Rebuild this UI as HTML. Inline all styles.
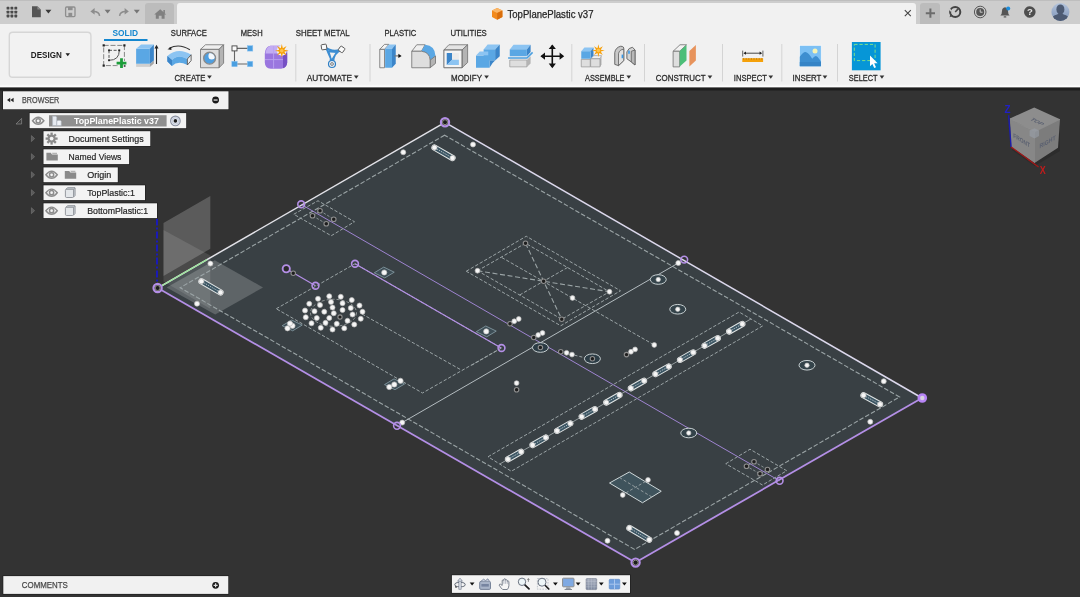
<!DOCTYPE html>
<html><head><meta charset="utf-8"><title>TopPlanePlastic v37</title>
<style>html,body{margin:0;padding:0;background:#333333;overflow:hidden}body{width:1080px;height:597px;font-family:"Liberation Sans",sans-serif}svg{display:block;will-change:transform}text{font-family:"Liberation Sans",sans-serif}</style>
</head><body>
<svg width="1080" height="597" viewBox="0 0 1080 597">
<rect x="0" y="88.5" width="1080" height="508.5" fill="#333333"/>
<polygon points="445.00,122.30 922.00,398.00 635.40,562.50 157.80,288.00" fill="#394044"/>
<polygon points="163.50,223.00 210.30,195.90 210.30,248.80 163.50,276.00" fill="#fff" opacity="0.2"/>
<polygon points="163.50,229.90 210.30,255.40 210.30,308.70 163.50,281.50" fill="#fff" opacity="0.11"/>
<polygon points="166.60,287.40 214.80,260.20 263.00,287.40 215.20,314.60" fill="#fff" opacity="0.19"/>
<polygon points="444.60,135.20 180.20,287.70 634.60,549.40 899.60,397.00" fill="none" stroke="#9ba4a6" stroke-width="1.1" stroke-dasharray="4.6 2"/>
<line x1="445.00" y1="122.30" x2="157.80" y2="288.00" stroke="#e2e2e8" stroke-width="1.5" opacity="1"/>
<line x1="445.00" y1="122.30" x2="922.00" y2="398.00" stroke="#dcd8ec" stroke-width="1.5" opacity="1"/>
<line x1="157.80" y1="288.00" x2="635.40" y2="562.50" stroke="#b48fe6" stroke-width="1.8" opacity="1"/>
<line x1="635.40" y1="562.50" x2="922.00" y2="398.00" stroke="#b48fe6" stroke-width="1.8" opacity="1"/>
<line x1="160.00" y1="286.80" x2="207.00" y2="259.60" stroke="#9be69b" stroke-width="1.3" opacity="1"/>
<line x1="157.00" y1="218.50" x2="157.00" y2="288.00" stroke="#1414d8" stroke-width="1.6" stroke-dasharray="7 2 2 2" opacity="1"/>
<line x1="301.00" y1="204.30" x2="779.50" y2="480.80" stroke="#a98be0" stroke-width="0.9" opacity="1"/>
<line x1="678.30" y1="263.00" x2="402.20" y2="422.60" stroke="#b4bcc0" stroke-width="1" opacity="1"/>
<polygon points="466.25,271.25 526.25,236.25 620.50,290.75 560.75,325.75" fill="none" stroke="#9ba4a6" stroke-width="1" stroke-dasharray="3.4 1.8"/>
<polygon points="477.50,270.75 525.50,243.25 609.50,291.75 561.75,319.25" fill="none" stroke="#9ba4a6" stroke-width="1" stroke-dasharray="3.4 1.8"/>
<line x1="477.50" y1="270.75" x2="609.50" y2="291.75" stroke="#9ba4a6" stroke-width="1.1" stroke-dasharray="5 2.6" opacity="1"/>
<line x1="525.50" y1="243.25" x2="561.75" y2="319.25" stroke="#9ba4a6" stroke-width="1.1" stroke-dasharray="5 2.6" opacity="1"/>
<line x1="501.75" y1="257.50" x2="654.25" y2="345.00" stroke="#9ba4a6" stroke-width="1" stroke-dasharray="3.4 1.8" opacity="1"/>
<line x1="519.60" y1="295.00" x2="567.50" y2="267.50" stroke="#9ba4a6" stroke-width="1" stroke-dasharray="3.4 1.8" opacity="1"/>
<circle cx="477.50" cy="270.75" r="2.4" fill="#f6f6f6" stroke="#bcbcbc" stroke-width="0.7"/>
<circle cx="609.50" cy="291.75" r="2.4" fill="#f6f6f6" stroke="#bcbcbc" stroke-width="0.7"/>
<circle cx="572.50" cy="298.00" r="2.4" fill="#f6f6f6" stroke="#bcbcbc" stroke-width="0.7"/>
<circle cx="654.25" cy="345.00" r="2.4" fill="#f6f6f6" stroke="#bcbcbc" stroke-width="0.7"/>
<circle cx="525.50" cy="243.25" r="2.25" fill="#1e1e1e" stroke="#8e8e8e" stroke-width="1.1"/>
<circle cx="561.75" cy="319.25" r="2.25" fill="#1e1e1e" stroke="#8e8e8e" stroke-width="1.1"/>
<circle cx="543.60" cy="281.25" r="2.25" fill="#1e1e1e" stroke="#8e8e8e" stroke-width="1.1"/>
<polygon points="276.25,308.75 355.00,263.75 501.25,348.00 422.50,393.00" fill="none" stroke="#9ba4a6" stroke-width="1" stroke-dasharray="3.4 1.8"/>
<line x1="362.00" y1="314.00" x2="461.25" y2="370.00" stroke="#9ba4a6" stroke-width="1" stroke-dasharray="3.4 1.8" opacity="1"/>
<line x1="501.50" y1="348.00" x2="470.00" y2="366.20" stroke="#9ba4a6" stroke-width="1" stroke-dasharray="3.4 1.8" opacity="1"/>
<line x1="286.25" y1="268.75" x2="315.50" y2="285.75" stroke="#b48fe6" stroke-width="1.2" opacity="1"/>
<line x1="355.00" y1="263.75" x2="501.25" y2="348.00" stroke="#b48fe6" stroke-width="1.2" opacity="1"/>
<ellipse cx="333.5" cy="312.8" rx="23" ry="13.5" fill="none" stroke="#9aa0a0" stroke-width="0.9" stroke-dasharray="3 2"/>
<circle cx="318.00" cy="298.75" r="2.5" fill="#f6f6f6" stroke="#bcbcbc" stroke-width="0.7"/>
<circle cx="329.25" cy="296.25" r="2.5" fill="#f6f6f6" stroke="#bcbcbc" stroke-width="0.7"/>
<circle cx="340.75" cy="296.75" r="2.5" fill="#f6f6f6" stroke="#bcbcbc" stroke-width="0.7"/>
<circle cx="351.75" cy="300.00" r="2.5" fill="#f6f6f6" stroke="#bcbcbc" stroke-width="0.7"/>
<circle cx="359.50" cy="305.50" r="2.5" fill="#f6f6f6" stroke="#bcbcbc" stroke-width="0.7"/>
<circle cx="362.50" cy="311.75" r="2.5" fill="#f6f6f6" stroke="#bcbcbc" stroke-width="0.7"/>
<circle cx="360.75" cy="318.75" r="2.5" fill="#f6f6f6" stroke="#bcbcbc" stroke-width="0.7"/>
<circle cx="354.25" cy="324.50" r="2.5" fill="#f6f6f6" stroke="#bcbcbc" stroke-width="0.7"/>
<circle cx="344.25" cy="328.25" r="2.5" fill="#f6f6f6" stroke="#bcbcbc" stroke-width="0.7"/>
<circle cx="332.50" cy="329.50" r="2.5" fill="#f6f6f6" stroke="#bcbcbc" stroke-width="0.7"/>
<circle cx="320.75" cy="327.75" r="2.5" fill="#f6f6f6" stroke="#bcbcbc" stroke-width="0.7"/>
<circle cx="311.50" cy="323.25" r="2.5" fill="#f6f6f6" stroke="#bcbcbc" stroke-width="0.7"/>
<circle cx="305.75" cy="317.25" r="2.5" fill="#f6f6f6" stroke="#bcbcbc" stroke-width="0.7"/>
<circle cx="305.00" cy="310.50" r="2.5" fill="#f6f6f6" stroke="#bcbcbc" stroke-width="0.7"/>
<circle cx="309.25" cy="303.75" r="2.5" fill="#f6f6f6" stroke="#bcbcbc" stroke-width="0.7"/>
<circle cx="320.00" cy="305.00" r="2.5" fill="#f6f6f6" stroke="#bcbcbc" stroke-width="0.7"/>
<circle cx="331.00" cy="302.00" r="2.5" fill="#f6f6f6" stroke="#bcbcbc" stroke-width="0.7"/>
<circle cx="342.50" cy="303.25" r="2.5" fill="#f6f6f6" stroke="#bcbcbc" stroke-width="0.7"/>
<circle cx="350.75" cy="308.00" r="2.5" fill="#f6f6f6" stroke="#bcbcbc" stroke-width="0.7"/>
<circle cx="352.50" cy="314.50" r="2.5" fill="#f6f6f6" stroke="#bcbcbc" stroke-width="0.7"/>
<circle cx="347.50" cy="320.75" r="2.5" fill="#f6f6f6" stroke="#bcbcbc" stroke-width="0.7"/>
<circle cx="336.75" cy="323.75" r="2.5" fill="#f6f6f6" stroke="#bcbcbc" stroke-width="0.7"/>
<circle cx="325.50" cy="322.75" r="2.5" fill="#f6f6f6" stroke="#bcbcbc" stroke-width="0.7"/>
<circle cx="316.75" cy="318.00" r="2.5" fill="#f6f6f6" stroke="#bcbcbc" stroke-width="0.7"/>
<circle cx="314.50" cy="311.25" r="2.5" fill="#f6f6f6" stroke="#bcbcbc" stroke-width="0.7"/>
<circle cx="324.25" cy="311.75" r="2.5" fill="#f6f6f6" stroke="#bcbcbc" stroke-width="0.7"/>
<circle cx="332.50" cy="307.50" r="2.5" fill="#f6f6f6" stroke="#bcbcbc" stroke-width="0.7"/>
<circle cx="333.75" cy="313.25" r="2.5" fill="#f6f6f6" stroke="#bcbcbc" stroke-width="0.7"/>
<circle cx="329.25" cy="318.00" r="2.5" fill="#f6f6f6" stroke="#bcbcbc" stroke-width="0.7"/>
<circle cx="342.50" cy="310.00" r="2.5" fill="#f6f6f6" stroke="#bcbcbc" stroke-width="0.7"/>
<circle cx="340.00" cy="317.00" r="2.1" fill="#1e1e1e" stroke="#8e8e8e" stroke-width="1.1"/>
<polygon points="374.25,272.80 383.75,267.10 394.25,272.20 384.75,277.90" fill="#3d4d55" stroke="#8aa0a8" stroke-width="0.8"/>
<circle cx="384.25" cy="272.50" r="2.6" fill="#f6f6f6" stroke="#bcbcbc" stroke-width="0.7"/>
<polygon points="476.25,331.70 485.75,326.00 496.25,331.10 486.75,336.80" fill="#3d4d55" stroke="#8aa0a8" stroke-width="0.8"/>
<circle cx="486.25" cy="331.40" r="2.6" fill="#f6f6f6" stroke="#bcbcbc" stroke-width="0.7"/>
<polygon points="282.20,325.70 291.70,320.00 302.20,325.10 292.70,330.80" fill="#3d4d55" stroke="#8aa0a8" stroke-width="0.8"/>
<circle cx="287.50" cy="328.30" r="2.6" fill="#f6f6f6" stroke="#bcbcbc" stroke-width="0.7"/>
<circle cx="292.50" cy="325.80" r="2.6" fill="#f6f6f6" stroke="#bcbcbc" stroke-width="0.7"/>
<circle cx="290.00" cy="323.50" r="2.6" fill="#f6f6f6" stroke="#bcbcbc" stroke-width="0.7"/>
<polygon points="384.50,384.60 394.00,378.90 404.50,384.00 395.00,389.70" fill="#3d4d55" stroke="#8aa0a8" stroke-width="0.8"/>
<circle cx="389.30" cy="387.00" r="2.6" fill="#f6f6f6" stroke="#bcbcbc" stroke-width="0.7"/>
<circle cx="394.30" cy="384.50" r="2.6" fill="#f6f6f6" stroke="#bcbcbc" stroke-width="0.7"/>
<circle cx="400.50" cy="380.80" r="2.6" fill="#f6f6f6" stroke="#bcbcbc" stroke-width="0.7"/>
<circle cx="510.00" cy="323.75" r="2.25" fill="#1e1e1e" stroke="#8e8e8e" stroke-width="1.1"/>
<circle cx="514.25" cy="321.25" r="2.4" fill="#f6f6f6" stroke="#bcbcbc" stroke-width="0.7"/>
<circle cx="518.75" cy="319.00" r="2.4" fill="#f6f6f6" stroke="#bcbcbc" stroke-width="0.7"/>
<circle cx="533.75" cy="337.50" r="2.25" fill="#1e1e1e" stroke="#8e8e8e" stroke-width="1.1"/>
<circle cx="538.25" cy="335.00" r="2.4" fill="#f6f6f6" stroke="#bcbcbc" stroke-width="0.7"/>
<circle cx="542.50" cy="333.00" r="2.4" fill="#f6f6f6" stroke="#bcbcbc" stroke-width="0.7"/>
<circle cx="560.75" cy="351.75" r="2.25" fill="#1e1e1e" stroke="#8e8e8e" stroke-width="1.1"/>
<circle cx="566.60" cy="352.80" r="2.4" fill="#f6f6f6" stroke="#bcbcbc" stroke-width="0.7"/>
<circle cx="572.00" cy="354.60" r="2.4" fill="#f6f6f6" stroke="#bcbcbc" stroke-width="0.7"/>
<circle cx="626.50" cy="354.60" r="2.25" fill="#1e1e1e" stroke="#8e8e8e" stroke-width="1.1"/>
<circle cx="631.00" cy="351.75" r="2.4" fill="#f6f6f6" stroke="#bcbcbc" stroke-width="0.7"/>
<circle cx="635.10" cy="349.40" r="2.4" fill="#f6f6f6" stroke="#bcbcbc" stroke-width="0.7"/>
<line x1="574.50" y1="355.20" x2="584.00" y2="357.50" stroke="#9ba4a6" stroke-width="1" stroke-dasharray="3 2" opacity="1"/>
<circle cx="516.60" cy="389.80" r="2.25" fill="#1e1e1e" stroke="#8e8e8e" stroke-width="1.1"/>
<circle cx="516.60" cy="383.10" r="2.4" fill="#f6f6f6" stroke="#bcbcbc" stroke-width="0.7"/>
<circle cx="293.25" cy="273.25" r="2.25" fill="#1e1e1e" stroke="#8e8e8e" stroke-width="1.1"/>
<ellipse cx="658.25" cy="279.50" rx="8" ry="4.8" fill="#34434a" stroke="#c8d0d2" stroke-width="1"/><circle cx="658.25" cy="279.50" r="2.2" fill="#f6f6f6" stroke="#bcbcbc" stroke-width="0.7"/>
<ellipse cx="677.75" cy="309.25" rx="8" ry="4.8" fill="#34434a" stroke="#c8d0d2" stroke-width="1"/><circle cx="677.75" cy="309.25" r="2.2" fill="#f6f6f6" stroke="#bcbcbc" stroke-width="0.7"/>
<ellipse cx="540.40" cy="347.50" rx="8" ry="4.8" fill="#2c3c45" stroke="#c8d0d2" stroke-width="1"/><circle cx="540.40" cy="347.50" r="2.2" fill="#1e1e1e" stroke="#8e8e8e" stroke-width="1.1"/>
<ellipse cx="592.40" cy="358.75" rx="8" ry="4.8" fill="#2c3c45" stroke="#c8d0d2" stroke-width="1"/><circle cx="592.40" cy="358.75" r="2.2" fill="#1e1e1e" stroke="#8e8e8e" stroke-width="1.1"/>
<ellipse cx="688.75" cy="433.00" rx="8" ry="4.8" fill="#34434a" stroke="#c8d0d2" stroke-width="1"/><circle cx="688.75" cy="433.00" r="2.2" fill="#f6f6f6" stroke="#bcbcbc" stroke-width="0.7"/>
<ellipse cx="807.00" cy="365.25" rx="8" ry="4.8" fill="#34434a" stroke="#c8d0d2" stroke-width="1"/><circle cx="807.00" cy="365.25" r="2.2" fill="#f6f6f6" stroke="#bcbcbc" stroke-width="0.7"/>
<polygon points="488.00,456.75 739.10,312.00 762.70,325.90 511.30,471.25" fill="none" stroke="#9ba4a6" stroke-width="1" stroke-dasharray="3.4 1.8"/>
<line x1="500.00" y1="463.90" x2="751.00" y2="318.90" stroke="#aab2b4" stroke-width="0.8" opacity="1"/>
<g transform="translate(514.55 455.52) rotate(-29.63)"><rect x="-10.14" y="-2.6" width="20.27" height="5.2" rx="2.6" fill="#3b5563" stroke="#e0e4e4" stroke-width="1"/><line x1="-7.54" y1="0" x2="7.54" y2="0" stroke="#cfd6d8" stroke-width="0.7" stroke-dasharray="1.5 1"/></g><circle cx="508.00" cy="459.25" r="2.5" fill="#f6f6f6" stroke="#bcbcbc" stroke-width="0.7"/><circle cx="521.10" cy="451.80" r="2.5" fill="#f6f6f6" stroke="#bcbcbc" stroke-width="0.7"/>
<g transform="translate(539.13 441.33) rotate(-29.63)"><rect x="-10.14" y="-2.6" width="20.27" height="5.2" rx="2.6" fill="#3b5563" stroke="#e0e4e4" stroke-width="1"/><line x1="-7.54" y1="0" x2="7.54" y2="0" stroke="#cfd6d8" stroke-width="0.7" stroke-dasharray="1.5 1"/></g><circle cx="532.58" cy="445.05" r="2.5" fill="#f6f6f6" stroke="#bcbcbc" stroke-width="0.7"/><circle cx="545.68" cy="437.60" r="2.5" fill="#f6f6f6" stroke="#bcbcbc" stroke-width="0.7"/>
<g transform="translate(563.71 427.12) rotate(-29.63)"><rect x="-10.14" y="-2.6" width="20.27" height="5.2" rx="2.6" fill="#3b5563" stroke="#e0e4e4" stroke-width="1"/><line x1="-7.54" y1="0" x2="7.54" y2="0" stroke="#cfd6d8" stroke-width="0.7" stroke-dasharray="1.5 1"/></g><circle cx="557.16" cy="430.85" r="2.5" fill="#f6f6f6" stroke="#bcbcbc" stroke-width="0.7"/><circle cx="570.26" cy="423.40" r="2.5" fill="#f6f6f6" stroke="#bcbcbc" stroke-width="0.7"/>
<g transform="translate(588.29 412.92) rotate(-29.63)"><rect x="-10.14" y="-2.6" width="20.27" height="5.2" rx="2.6" fill="#3b5563" stroke="#e0e4e4" stroke-width="1"/><line x1="-7.54" y1="0" x2="7.54" y2="0" stroke="#cfd6d8" stroke-width="0.7" stroke-dasharray="1.5 1"/></g><circle cx="581.74" cy="416.65" r="2.5" fill="#f6f6f6" stroke="#bcbcbc" stroke-width="0.7"/><circle cx="594.84" cy="409.20" r="2.5" fill="#f6f6f6" stroke="#bcbcbc" stroke-width="0.7"/>
<g transform="translate(612.87 398.73) rotate(-29.63)"><rect x="-10.14" y="-2.6" width="20.27" height="5.2" rx="2.6" fill="#3b5563" stroke="#e0e4e4" stroke-width="1"/><line x1="-7.54" y1="0" x2="7.54" y2="0" stroke="#cfd6d8" stroke-width="0.7" stroke-dasharray="1.5 1"/></g><circle cx="606.32" cy="402.45" r="2.5" fill="#f6f6f6" stroke="#bcbcbc" stroke-width="0.7"/><circle cx="619.42" cy="395.00" r="2.5" fill="#f6f6f6" stroke="#bcbcbc" stroke-width="0.7"/>
<g transform="translate(637.45 384.52) rotate(-29.63)"><rect x="-10.14" y="-2.6" width="20.27" height="5.2" rx="2.6" fill="#3b5563" stroke="#e0e4e4" stroke-width="1"/><line x1="-7.54" y1="0" x2="7.54" y2="0" stroke="#cfd6d8" stroke-width="0.7" stroke-dasharray="1.5 1"/></g><circle cx="630.90" cy="388.25" r="2.5" fill="#f6f6f6" stroke="#bcbcbc" stroke-width="0.7"/><circle cx="644.00" cy="380.80" r="2.5" fill="#f6f6f6" stroke="#bcbcbc" stroke-width="0.7"/>
<g transform="translate(662.03 370.33) rotate(-29.63)"><rect x="-10.14" y="-2.6" width="20.27" height="5.2" rx="2.6" fill="#3b5563" stroke="#e0e4e4" stroke-width="1"/><line x1="-7.54" y1="0" x2="7.54" y2="0" stroke="#cfd6d8" stroke-width="0.7" stroke-dasharray="1.5 1"/></g><circle cx="655.48" cy="374.05" r="2.5" fill="#f6f6f6" stroke="#bcbcbc" stroke-width="0.7"/><circle cx="668.58" cy="366.60" r="2.5" fill="#f6f6f6" stroke="#bcbcbc" stroke-width="0.7"/>
<g transform="translate(686.61 356.12) rotate(-29.63)"><rect x="-10.14" y="-2.6" width="20.27" height="5.2" rx="2.6" fill="#3b5563" stroke="#e0e4e4" stroke-width="1"/><line x1="-7.54" y1="0" x2="7.54" y2="0" stroke="#cfd6d8" stroke-width="0.7" stroke-dasharray="1.5 1"/></g><circle cx="680.06" cy="359.85" r="2.5" fill="#f6f6f6" stroke="#bcbcbc" stroke-width="0.7"/><circle cx="693.16" cy="352.40" r="2.5" fill="#f6f6f6" stroke="#bcbcbc" stroke-width="0.7"/>
<g transform="translate(711.19 341.92) rotate(-29.63)"><rect x="-10.14" y="-2.6" width="20.27" height="5.2" rx="2.6" fill="#3b5563" stroke="#e0e4e4" stroke-width="1"/><line x1="-7.54" y1="0" x2="7.54" y2="0" stroke="#cfd6d8" stroke-width="0.7" stroke-dasharray="1.5 1"/></g><circle cx="704.64" cy="345.65" r="2.5" fill="#f6f6f6" stroke="#bcbcbc" stroke-width="0.7"/><circle cx="717.74" cy="338.20" r="2.5" fill="#f6f6f6" stroke="#bcbcbc" stroke-width="0.7"/>
<g transform="translate(735.77 327.73) rotate(-29.63)"><rect x="-10.14" y="-2.6" width="20.27" height="5.2" rx="2.6" fill="#3b5563" stroke="#e0e4e4" stroke-width="1"/><line x1="-7.54" y1="0" x2="7.54" y2="0" stroke="#cfd6d8" stroke-width="0.7" stroke-dasharray="1.5 1"/></g><circle cx="729.22" cy="331.45" r="2.5" fill="#f6f6f6" stroke="#bcbcbc" stroke-width="0.7"/><circle cx="742.32" cy="324.00" r="2.5" fill="#f6f6f6" stroke="#bcbcbc" stroke-width="0.7"/>
<g transform="translate(443.50 152.80) rotate(30.02)"><rect x="-12.99" y="-2.6" width="25.99" height="5.2" rx="2.6" fill="#3b5563" stroke="#e0e4e4" stroke-width="1"/><line x1="-10.39" y1="0" x2="10.39" y2="0" stroke="#cfd6d8" stroke-width="0.7" stroke-dasharray="1.5 1"/></g><circle cx="434.50" cy="147.60" r="2.5" fill="#f6f6f6" stroke="#bcbcbc" stroke-width="0.7"/><circle cx="452.50" cy="158.00" r="2.5" fill="#f6f6f6" stroke="#bcbcbc" stroke-width="0.7"/>
<g transform="translate(210.95 286.85) rotate(30.16)"><rect x="-13.65" y="-2.6" width="27.29" height="5.2" rx="2.6" fill="#3b5563" stroke="#e0e4e4" stroke-width="1"/><line x1="-11.05" y1="0" x2="11.05" y2="0" stroke="#cfd6d8" stroke-width="0.7" stroke-dasharray="1.5 1"/></g><circle cx="201.40" cy="281.30" r="2.5" fill="#f6f6f6" stroke="#bcbcbc" stroke-width="0.7"/><circle cx="220.50" cy="292.40" r="2.5" fill="#f6f6f6" stroke="#bcbcbc" stroke-width="0.7"/>
<g transform="translate(871.75 399.77) rotate(28.74)"><rect x="-12.01" y="-2.6" width="24.02" height="5.2" rx="2.6" fill="#3b5563" stroke="#e0e4e4" stroke-width="1"/><line x1="-9.41" y1="0" x2="9.41" y2="0" stroke="#cfd6d8" stroke-width="0.7" stroke-dasharray="1.5 1"/></g><circle cx="863.50" cy="395.25" r="2.5" fill="#f6f6f6" stroke="#bcbcbc" stroke-width="0.7"/><circle cx="880.00" cy="404.30" r="2.5" fill="#f6f6f6" stroke="#bcbcbc" stroke-width="0.7"/>
<g transform="translate(639.30 533.85) rotate(30.58)"><rect x="-14.10" y="-2.6" width="28.20" height="5.2" rx="2.6" fill="#3b5563" stroke="#e0e4e4" stroke-width="1"/><line x1="-11.50" y1="0" x2="11.50" y2="0" stroke="#cfd6d8" stroke-width="0.7" stroke-dasharray="1.5 1"/></g><circle cx="629.40" cy="528.00" r="2.5" fill="#f6f6f6" stroke="#bcbcbc" stroke-width="0.7"/><circle cx="649.20" cy="539.70" r="2.5" fill="#f6f6f6" stroke="#bcbcbc" stroke-width="0.7"/>
<circle cx="403.25" cy="152.25" r="2.5" fill="#f6f6f6" stroke="#bcbcbc" stroke-width="0.7"/>
<circle cx="473.00" cy="144.50" r="2.5" fill="#f6f6f6" stroke="#bcbcbc" stroke-width="0.7"/>
<circle cx="210.40" cy="263.60" r="2.5" fill="#f6f6f6" stroke="#bcbcbc" stroke-width="0.7"/>
<circle cx="197.00" cy="303.70" r="2.5" fill="#f6f6f6" stroke="#bcbcbc" stroke-width="0.7"/>
<circle cx="883.75" cy="381.25" r="2.5" fill="#f6f6f6" stroke="#bcbcbc" stroke-width="0.7"/>
<circle cx="870.25" cy="421.75" r="2.5" fill="#f6f6f6" stroke="#bcbcbc" stroke-width="0.7"/>
<circle cx="607.50" cy="540.75" r="2.5" fill="#f6f6f6" stroke="#bcbcbc" stroke-width="0.7"/>
<circle cx="677.00" cy="533.00" r="2.5" fill="#f6f6f6" stroke="#bcbcbc" stroke-width="0.7"/>
<circle cx="402.20" cy="422.60" r="2.5" fill="#f6f6f6" stroke="#bcbcbc" stroke-width="0.7"/>
<circle cx="678.30" cy="263.00" r="2.5" fill="#f6f6f6" stroke="#bcbcbc" stroke-width="0.7"/>
<polygon points="609.50,483.00 629.25,472.00 661.25,491.25 642.50,502.75" fill="#3f535c" stroke="#cfd8da" stroke-width="1"/>
<line x1="619.40" y1="477.50" x2="651.90" y2="497.00" stroke="#9ba4a6" stroke-width="0.9" stroke-dasharray="3 2" opacity="1"/>
<line x1="625.80" y1="492.90" x2="645.30" y2="481.60" stroke="#9ba4a6" stroke-width="0.9" stroke-dasharray="3 2" opacity="1"/>
<circle cx="648.00" cy="480.00" r="2.4" fill="#f6f6f6" stroke="#bcbcbc" stroke-width="0.7"/>
<circle cx="622.75" cy="495.00" r="2.4" fill="#f6f6f6" stroke="#bcbcbc" stroke-width="0.7"/>
<polygon points="293.75,214.25 318.00,200.75 354.50,221.75 331.25,235.75" fill="none" stroke="#9ba4a6" stroke-width="1" stroke-dasharray="3.4 1.8"/>
<polygon points="320.00,210.75 333.75,219.25 326.25,223.75 312.50,215.75" fill="none" stroke="#9ba4a6" stroke-width="0.8" stroke-dasharray="2.6 1.6"/>
<circle cx="320.00" cy="210.75" r="2.3" fill="#1e1e1e" stroke="#8e8e8e" stroke-width="1.1"/>
<circle cx="312.50" cy="215.75" r="2.3" fill="#1e1e1e" stroke="#8e8e8e" stroke-width="1.1"/>
<circle cx="333.75" cy="219.25" r="2.3" fill="#1e1e1e" stroke="#8e8e8e" stroke-width="1.1"/>
<circle cx="326.25" cy="223.75" r="2.3" fill="#1e1e1e" stroke="#8e8e8e" stroke-width="1.1"/>
<polygon points="725.75,463.75 750.00,449.25 786.75,470.75 762.50,485.00" fill="none" stroke="#9ba4a6" stroke-width="1" stroke-dasharray="3.4 1.8"/>
<polygon points="754.00,461.75 767.50,469.50 760.00,473.75 746.50,466.25" fill="none" stroke="#9ba4a6" stroke-width="0.8" stroke-dasharray="2.6 1.6"/>
<circle cx="754.00" cy="461.75" r="2.3" fill="#1e1e1e" stroke="#8e8e8e" stroke-width="1.1"/>
<circle cx="746.50" cy="466.25" r="2.3" fill="#1e1e1e" stroke="#8e8e8e" stroke-width="1.1"/>
<circle cx="767.50" cy="469.50" r="2.3" fill="#1e1e1e" stroke="#8e8e8e" stroke-width="1.1"/>
<circle cx="760.00" cy="473.75" r="2.3" fill="#1e1e1e" stroke="#8e8e8e" stroke-width="1.1"/>
<circle cx="445" cy="122.2" r="4.1" fill="#1c1c1c" stroke="#b48fe6" stroke-width="2.2"/><circle cx="445" cy="122.2" r="2.5" fill="none" stroke="#9a9a90" stroke-width="0.9"/>
<circle cx="157.6" cy="288" r="4.1" fill="#1c1c1c" stroke="#b48fe6" stroke-width="2.2"/><circle cx="157.6" cy="288" r="2.5" fill="none" stroke="#9a9a90" stroke-width="0.9"/>
<circle cx="635.6" cy="562.6" r="4.1" fill="#1c1c1c" stroke="#b48fe6" stroke-width="2.2"/><circle cx="635.6" cy="562.6" r="2.5" fill="none" stroke="#9a9a90" stroke-width="0.9"/>
<circle cx="922.3" cy="398" r="3.5" fill="#d8d2e0" stroke="#b784f5" stroke-width="2.6"/>
<circle cx="301.20" cy="204.30" r="3.4" fill="none" stroke="#b48fe6" stroke-width="1.6"/>
<circle cx="684.20" cy="259.60" r="3.4" fill="none" stroke="#b48fe6" stroke-width="1.6"/>
<circle cx="779.60" cy="480.80" r="3.4" fill="none" stroke="#b48fe6" stroke-width="1.6"/>
<circle cx="397.00" cy="425.80" r="3.4" fill="none" stroke="#b48fe6" stroke-width="1.6"/>
<circle cx="315.50" cy="285.75" r="3.4" fill="none" stroke="#b48fe6" stroke-width="1.6"/>
<circle cx="355.00" cy="263.75" r="3.4" fill="none" stroke="#b48fe6" stroke-width="1.6"/>
<circle cx="501.50" cy="348.00" r="3.4" fill="none" stroke="#b48fe6" stroke-width="1.6"/>
<circle cx="286.25" cy="268.75" r="3.6" fill="#2a2a2a" stroke="#b48fe6" stroke-width="1.9"/>
<rect x="0" y="0" width="1080" height="24" fill="#cdcdcd"/>
<rect x="0" y="0" width="1080" height="1" fill="#bebebe"/>
<rect x="0" y="24" width="1080" height="63" fill="#f1f1f1"/>
<defs><linearGradient id="tb" x1="0" y1="0" x2="0" y2="1"><stop offset="0" stop-color="#f1f1f1"/><stop offset="0.6" stop-color="#fbfbfb"/><stop offset="1" stop-color="#ffffff"/></linearGradient></defs><rect x="0" y="84.2" width="1080" height="3.4" fill="url(#tb)"/>
<rect x="0" y="87.6" width="1080" height="2.6" fill="#1d1d1d"/><rect x="0" y="90.2" width="1080" height="0.7" fill="#282828"/>
<path d="M145 24V6q0-3 3-3h23q3 0 3 3V24z" fill="#bcbcbc"/>
<path d="M177 24V6q0-3 3-3h733q3 0 3 3V24z" fill="#f1f1f1"/>
<path d="M920 24V6q0-3 3-3h14q3 0 3 3V24z" fill="#bcbcbc"/>
<text x="112.5" y="35.5" font-size="9.2" fill="#1487cf" font-weight="bold" text-anchor="start" textLength="25.5" lengthAdjust="spacingAndGlyphs" >SOLID</text>
<rect x="104" y="39" width="43.5" height="2" fill="#1487cf"/>
<text x="170.8" y="35.5" font-size="9.2" fill="#2e2e2e" font-weight="normal" text-anchor="start" textLength="36" lengthAdjust="spacingAndGlyphs"  stroke="#2e2e2e" stroke-width="0.3">SURFACE</text>
<text x="240.8" y="35.5" font-size="9.2" fill="#2e2e2e" font-weight="normal" text-anchor="start" textLength="21.8" lengthAdjust="spacingAndGlyphs"  stroke="#2e2e2e" stroke-width="0.3">MESH</text>
<text x="295.8" y="35.5" font-size="9.2" fill="#2e2e2e" font-weight="normal" text-anchor="start" textLength="53.8" lengthAdjust="spacingAndGlyphs"  stroke="#2e2e2e" stroke-width="0.3">SHEET METAL</text>
<text x="384.5" y="35.5" font-size="9.2" fill="#2e2e2e" font-weight="normal" text-anchor="start" textLength="31.8" lengthAdjust="spacingAndGlyphs"  stroke="#2e2e2e" stroke-width="0.3">PLASTIC</text>
<text x="450.5" y="35.5" font-size="9.2" fill="#2e2e2e" font-weight="normal" text-anchor="start" textLength="36.3" lengthAdjust="spacingAndGlyphs"  stroke="#2e2e2e" stroke-width="0.3">UTILITIES</text>
<text x="174.5" y="80.5" font-size="9.5" fill="#2a2a2a" font-weight="normal" text-anchor="start" textLength="31" lengthAdjust="spacingAndGlyphs"  stroke="#2a2a2a" stroke-width="0.3">CREATE</text>
<path d="M207.1 75.6h4.7l-2.35 3.2z" fill="#333"/>
<text x="306.8" y="80.5" font-size="9.5" fill="#2a2a2a" font-weight="normal" text-anchor="start" textLength="45.2" lengthAdjust="spacingAndGlyphs"  stroke="#2a2a2a" stroke-width="0.3">AUTOMATE</text>
<path d="M353.90000000000003 75.6h4.7l-2.35 3.2z" fill="#333"/>
<text x="451" y="80.5" font-size="9.5" fill="#2a2a2a" font-weight="normal" text-anchor="start" textLength="31" lengthAdjust="spacingAndGlyphs"  stroke="#2a2a2a" stroke-width="0.3">MODIFY</text>
<path d="M484.20000000000005 75.6h4.7l-2.35 3.2z" fill="#333"/>
<text x="585" y="80.5" font-size="9.5" fill="#2a2a2a" font-weight="normal" text-anchor="start" textLength="39.5" lengthAdjust="spacingAndGlyphs"  stroke="#2a2a2a" stroke-width="0.3">ASSEMBLE</text>
<path d="M626.4 75.6h4.7l-2.35 3.2z" fill="#333"/>
<text x="655.8" y="80.5" font-size="9.5" fill="#2a2a2a" font-weight="normal" text-anchor="start" textLength="49.7" lengthAdjust="spacingAndGlyphs"  stroke="#2a2a2a" stroke-width="0.3">CONSTRUCT</text>
<path d="M707.6 75.6h4.7l-2.35 3.2z" fill="#333"/>
<text x="733.8" y="80.5" font-size="9.5" fill="#2a2a2a" font-weight="normal" text-anchor="start" textLength="33" lengthAdjust="spacingAndGlyphs"  stroke="#2a2a2a" stroke-width="0.3">INSPECT</text>
<path d="M768.4 75.6h4.7l-2.35 3.2z" fill="#333"/>
<text x="792.5" y="80.5" font-size="9.5" fill="#2a2a2a" font-weight="normal" text-anchor="start" textLength="28.8" lengthAdjust="spacingAndGlyphs"  stroke="#2a2a2a" stroke-width="0.3">INSERT</text>
<path d="M822.6 75.6h4.7l-2.35 3.2z" fill="#333"/>
<text x="848.8" y="80.5" font-size="9.5" fill="#2a2a2a" font-weight="normal" text-anchor="start" textLength="28.8" lengthAdjust="spacingAndGlyphs"  stroke="#2a2a2a" stroke-width="0.3">SELECT</text>
<path d="M879.6 75.6h4.7l-2.35 3.2z" fill="#333"/>
<rect x="295.3" y="44" width="1" height="37.5" fill="#d4d4d4"/>
<rect x="369.5" y="44" width="1" height="37.5" fill="#d4d4d4"/>
<rect x="571.3" y="44" width="1" height="37.5" fill="#d4d4d4"/>
<rect x="644.0" y="44" width="1" height="37.5" fill="#d4d4d4"/>
<rect x="722.0" y="44" width="1" height="37.5" fill="#d4d4d4"/>
<rect x="781.3" y="44" width="1" height="37.5" fill="#d4d4d4"/>
<rect x="837.0" y="44" width="1" height="37.5" fill="#d4d4d4"/>
<rect x="9.3" y="32.3" width="81.6" height="45" rx="3.4" fill="#f2f2f2" stroke="#d6d6d6" stroke-width="1.4"/>
<text x="30.8" y="57.5" font-size="9.2" fill="#1e1e1e" font-weight="bold" text-anchor="start" textLength="31" lengthAdjust="spacingAndGlyphs" >DESIGN</text>
<path d="M65.5 53.3h4.5l-2.25 3z" fill="#1e1e1e"/>
<text x="507.5" y="17.6" font-size="10" fill="#262626" font-weight="normal" text-anchor="start" textLength="86" lengthAdjust="spacingAndGlyphs" stroke="#262626" stroke-width="0.25">TopPlanePlastic v37</text>
<rect x="2.3" y="90.6" width="226.9" height="19.4" fill="#1e1e1e"/><rect x="3" y="91.3" width="225.5" height="18" fill="#f1f1f1"/>
<text x="22" y="102.9" font-size="9.3" fill="#484848" font-weight="normal" text-anchor="start" textLength="37.3" lengthAdjust="spacingAndGlyphs"  stroke="#484848" stroke-width="0.25">BROWSER</text>
<path d="M7 100l3.2-2.2v4.4zM10.4 100l3.2-2.2v4.4z" fill="#222"/>
<circle cx="215.6" cy="100" r="3.4" fill="#1a1a1a"/><rect x="213.6" y="99.4" width="4" height="1.3" fill="#ddd"/>
<rect x="2.6" y="575.4" width="226.4" height="19.2" fill="#1e1e1e"/><rect x="3.3" y="576.1" width="225" height="17.8" fill="#f1f1f1"/>
<text x="21.8" y="588.3" font-size="9.3" fill="#484848" font-weight="normal" text-anchor="start" textLength="46" lengthAdjust="spacingAndGlyphs"  stroke="#484848" stroke-width="0.25">COMMENTS</text>
<circle cx="215.6" cy="585.3" r="3.4" fill="#1a1a1a"/><path d="M213.6 585.3h4M215.6 583.3v4" stroke="#ddd" stroke-width="1.2"/>
<rect x="451.2" y="574.5" width="179.5" height="19.1" fill="#1e1e1e"/><rect x="451.9" y="575.2" width="178.1" height="17.7" fill="#f3f3f3"/>
<rect x="28.9" y="112.4" width="158" height="16.5" fill="#202020"/><rect x="29.6" y="113.1" width="156.6" height="15.1" fill="#f3f3f3"/>
<rect x="49" y="115.2" width="117.6" height="11.3" fill="#8f8f8f"/>
<path d="M32.5 120.8q5.7 -7.2 11.4 0q-5.7 7.2 -11.4 0z" fill="#f6f6f6" stroke="#8c8c8c" stroke-width="1.4"/><circle cx="38.2" cy="120.8" r="2.1" fill="#f4f4f4" stroke="#8c8c8c" stroke-width="1.5"/>
<path d="M52.6 125.6v-9.4h3.2l0.9 1v8.4z" fill="#e6eaf0" stroke="#b4bac4" stroke-width="0.6"/><path d="M56.9 125.6v-4.4l1-0.8h2.4l0.9 0.8v4.4z" fill="#f0f3f7" stroke="#b4bac4" stroke-width="0.6"/>
<text x="73.9" y="124.4" font-size="9.6" fill="#ffffff" font-weight="bold" text-anchor="start" textLength="85" lengthAdjust="spacingAndGlyphs" >TopPlanePlastic v37</text>
<circle cx="175.4" cy="120.9" r="4.8" fill="#e4e8f0" stroke="#8a90a0" stroke-width="1.1"/><circle cx="175.4" cy="120.9" r="3.2" fill="none" stroke="#c2c9d8" stroke-width="1"/><circle cx="175.4" cy="120.9" r="1.8" fill="#1c1c1c"/>
<path d="M21.6 118.4v5.6h-5.6z" fill="#3c3c3c" stroke="#8a8a8a" stroke-width="0.7"/>
<rect x="42.8" y="130.5" width="108.2" height="16.2" fill="#202020"/><rect x="43.5" y="131.2" width="106.8" height="14.8" fill="#f3f3f3"/>
<text x="68.6" y="142.0" font-size="9.6" fill="#262626" font-weight="normal" text-anchor="start" textLength="75.1" lengthAdjust="spacingAndGlyphs"  stroke="#262626" stroke-width="0.2">Document Settings</text>
<path d="M31.4 135.6l3.2 3l-3.2 3z" fill="#5a5a5a" stroke="#777" stroke-width="0.6"/>
<rect x="50.45" y="132.6" width="2.3" height="3.2" fill="#8a8a8a" transform="rotate(0 51.6 138.6)"/><rect x="50.45" y="132.6" width="2.3" height="3.2" fill="#8a8a8a" transform="rotate(45 51.6 138.6)"/><rect x="50.45" y="132.6" width="2.3" height="3.2" fill="#8a8a8a" transform="rotate(90 51.6 138.6)"/><rect x="50.45" y="132.6" width="2.3" height="3.2" fill="#8a8a8a" transform="rotate(135 51.6 138.6)"/><rect x="50.45" y="132.6" width="2.3" height="3.2" fill="#8a8a8a" transform="rotate(180 51.6 138.6)"/><rect x="50.45" y="132.6" width="2.3" height="3.2" fill="#8a8a8a" transform="rotate(225 51.6 138.6)"/><rect x="50.45" y="132.6" width="2.3" height="3.2" fill="#8a8a8a" transform="rotate(270 51.6 138.6)"/><rect x="50.45" y="132.6" width="2.3" height="3.2" fill="#8a8a8a" transform="rotate(315 51.6 138.6)"/><circle cx="51.6" cy="138.6" r="3.9" fill="#8a8a8a"/><circle cx="51.6" cy="138.6" r="1.9" fill="#f4f4f4"/>
<rect x="42.8" y="148.6" width="87.0" height="16.2" fill="#202020"/><rect x="43.5" y="149.3" width="85.6" height="14.8" fill="#f3f3f3"/>
<text x="68.6" y="160.10000000000002" font-size="9.6" fill="#262626" font-weight="normal" text-anchor="start" textLength="52.8" lengthAdjust="spacingAndGlyphs"  stroke="#262626" stroke-width="0.2">Named Views</text>
<path d="M31.4 153.70000000000002l3.2 3l-3.2 3z" fill="#5a5a5a" stroke="#777" stroke-width="0.6"/>
<path d="M46.4 160.6V152.8h4.4l1.2 1.6h5.8V160.6z" fill="#8a8a8a"/><path d="M51.8 152.70000000000002h5.2v1.2h-4.4z" fill="#8a8a8a" opacity=".6"/>
<rect x="42.8" y="166.7" width="75.7" height="16.2" fill="#202020"/><rect x="43.5" y="167.4" width="74.3" height="14.8" fill="#f3f3f3"/>
<text x="87.2" y="178.20000000000002" font-size="9.6" fill="#262626" font-weight="normal" text-anchor="start" textLength="24.1" lengthAdjust="spacingAndGlyphs"  stroke="#262626" stroke-width="0.2">Origin</text>
<path d="M31.4 171.8l3.2 3l-3.2 3z" fill="#5a5a5a" stroke="#777" stroke-width="0.6"/>
<path d="M45.9 174.8q5.7 -7.2 11.4 0q-5.7 7.2 -11.4 0z" fill="#f6f6f6" stroke="#8c8c8c" stroke-width="1.4"/><circle cx="51.6" cy="174.8" r="2.1" fill="#f4f4f4" stroke="#8c8c8c" stroke-width="1.5"/>
<path d="M64.8 178.7V170.9h4.4l1.2 1.6h5.8V178.7z" fill="#8a8a8a"/><path d="M70.2 170.8h5.2v1.2h-4.4z" fill="#8a8a8a" opacity=".6"/>
<rect x="42.8" y="184.6" width="102.9" height="16.2" fill="#202020"/><rect x="43.5" y="185.3" width="101.5" height="14.8" fill="#f3f3f3"/>
<text x="87.2" y="196.10000000000002" font-size="9.6" fill="#262626" font-weight="normal" text-anchor="start" textLength="47.7" lengthAdjust="spacingAndGlyphs"  stroke="#262626" stroke-width="0.2">TopPlastic:1</text>
<path d="M31.4 189.70000000000002l3.2 3l-3.2 3z" fill="#5a5a5a" stroke="#777" stroke-width="0.6"/>
<path d="M45.9 192.70000000000002q5.7 -7.2 11.4 0q-5.7 7.2 -11.4 0z" fill="#f6f6f6" stroke="#8c8c8c" stroke-width="1.4"/><circle cx="51.6" cy="192.70000000000002" r="2.1" fill="#f4f4f4" stroke="#8c8c8c" stroke-width="1.5"/>
<rect x="65.4" y="189.10000000000002" width="8.2" height="8.4" rx="1.2" fill="#e4e7ea" stroke="#8c9096" stroke-width="0.9"/><path d="M66.0 189.10000000000002l1.8 -1.6h7.2l-1.6 1.6zM73.60000000000001 189.70000000000002l1.6 -1.8v7.6l-1.6 1.6z" fill="#c4c8ce" stroke="#8c9096" stroke-width="0.7" stroke-linejoin="round"/>
<rect x="42.8" y="202.6" width="114.9" height="16.2" fill="#202020"/><rect x="43.5" y="203.3" width="113.5" height="14.8" fill="#f3f3f3"/>
<text x="87.2" y="214.10000000000002" font-size="9.6" fill="#262626" font-weight="normal" text-anchor="start" textLength="61" lengthAdjust="spacingAndGlyphs"  stroke="#262626" stroke-width="0.2">BottomPlastic:1</text>
<path d="M31.4 207.70000000000002l3.2 3l-3.2 3z" fill="#5a5a5a" stroke="#777" stroke-width="0.6"/>
<path d="M45.9 210.70000000000002q5.7 -7.2 11.4 0q-5.7 7.2 -11.4 0z" fill="#f6f6f6" stroke="#8c8c8c" stroke-width="1.4"/><circle cx="51.6" cy="210.70000000000002" r="2.1" fill="#f4f4f4" stroke="#8c8c8c" stroke-width="1.5"/>
<rect x="65.4" y="207.10000000000002" width="8.2" height="8.4" rx="1.2" fill="#e4e7ea" stroke="#8c9096" stroke-width="0.9"/><path d="M66.0 207.10000000000002l1.8 -1.6h7.2l-1.6 1.6zM73.60000000000001 207.70000000000002l1.6 -1.8v7.6l-1.6 1.6z" fill="#c4c8ce" stroke="#8c9096" stroke-width="0.7" stroke-linejoin="round"/>
<polygon points="1012,150 1034.5,166 1060,151 1060,122 1040,118" fill="#262626" opacity="0.5"/>
<polygon points="1034.2,107.6 1060,119.3 1034.5,131.9 1009.9,118.5" fill="#8d8d8d"/>
<polygon points="1009.9,118.5 1034.5,131.9 1034.5,162.9 1011.1,147" fill="#878787"/>
<polygon points="1034.5,131.9 1060,119.3 1058,147.8 1034.5,162.9" fill="#7c7c7c"/>
<polyline points="1009.9,118.5 1034.5,131.9 1060,119.3" fill="none" stroke="#9a9a9a" stroke-width="0.7"/><line x1="1034.5" y1="131.9" x2="1034.5" y2="162.9" stroke="#949494" stroke-width="0.7"/>
<polygon points="1034.5,128.2 1039,130.5 1039,136 1034.5,138.4 1029.6,136 1029.6,130.5" fill="#9aa0aa" opacity=".6"/>
<text font-size="6.8" fill="#5a6070" font-weight="bold" transform="matrix(0.84 0.44 -0.78 0.36 1029.6 119.4)">TOP</text>
<text font-size="6.2" fill="#5a6070" font-weight="bold" transform="matrix(0.8 0.5 0 1 1013.2 137.2)" textLength="21" lengthAdjust="spacingAndGlyphs">FRONT</text>
<text font-size="6.2" fill="#5a6070" font-weight="bold" transform="matrix(0.8 -0.46 0 1 1039.6 148.6)" textLength="20" lengthAdjust="spacingAndGlyphs">RIGHT</text>
<line x1="1008.6" y1="115.2" x2="1011.1" y2="147" stroke="#1c1cb0" stroke-width="1.4"/>
<line x1="1011.1" y1="147" x2="1038.6" y2="167" stroke="#a01818" stroke-width="1.3"/>
<text x="1004.6" y="112.6" font-size="10" fill="#2020c8" font-weight="bold" text-anchor="start" textLength="6" lengthAdjust="spacingAndGlyphs" >Z</text>
<text x="1039.8" y="173.6" font-size="10" fill="#c01c1c" font-weight="bold" text-anchor="start" textLength="6" lengthAdjust="spacingAndGlyphs" >X</text>
<rect x="6.6" y="6.8" width="2.8" height="2.8" rx="0.6" fill="#4a4a4a"/>
<rect x="6.6" y="10.7" width="2.8" height="2.8" rx="0.6" fill="#4a4a4a"/>
<rect x="6.6" y="14.6" width="2.8" height="2.8" rx="0.6" fill="#4a4a4a"/>
<rect x="10.5" y="6.8" width="2.8" height="2.8" rx="0.6" fill="#4a4a4a"/>
<rect x="10.5" y="10.7" width="2.8" height="2.8" rx="0.6" fill="#4a4a4a"/>
<rect x="10.5" y="14.6" width="2.8" height="2.8" rx="0.6" fill="#4a4a4a"/>
<rect x="14.399999999999999" y="6.8" width="2.8" height="2.8" rx="0.6" fill="#4a4a4a"/>
<rect x="14.399999999999999" y="10.7" width="2.8" height="2.8" rx="0.6" fill="#4a4a4a"/>
<rect x="14.399999999999999" y="14.6" width="2.8" height="2.8" rx="0.6" fill="#4a4a4a"/>
<path d="M32 6.2h5.4l3.4 3.4v7.6h-8.8z" fill="#555"/><path d="M37.4 6.2v3.4h3.4z" fill="#8a8a8a"/>
<path d="M45.4 9.8h6l-3.0 3.8z" fill="#3a3a3a"/>
<rect x="65.6" y="7" width="9.4" height="9.6" rx="1" fill="none" stroke="#8e8e8e" stroke-width="1.3"/><rect x="68" y="7" width="4.6" height="3.2" fill="#8e8e8e"/><rect x="68.4" y="12.8" width="3.8" height="3.6" fill="#8e8e8e"/>
<path d="M99.6 15.8q-0.6 -4.6 -6.4 -4.4" fill="none" stroke="#8c8c8c" stroke-width="1.5"/><path d="M90.4 11.4l4.2 -3.4v6.6z" fill="#8c8c8c"/>
<path d="M104.6 9.8h6l-3.0 3.8z" fill="#767676"/>
<path d="M119.6 15.8q0.6 -4.6 6.4 -4.4" fill="none" stroke="#8c8c8c" stroke-width="1.5"/><path d="M128.8 11.4l-4.2 -3.4v6.6z" fill="#8c8c8c"/>
<path d="M133.8 9.8h6l-3.0 3.8z" fill="#767676"/>
<path d="M154.2 14.6l6 -5.4l6 5.4h-1.6v4.2h-3v-3h-2.8v3h-3v-4.2z" fill="#808080"/><rect x="163.4" y="10" width="1.5" height="3" fill="#808080"/>
<path d="M497.2 8l5.2 2.4v6.6l-5.2 2.8l-5.2 -2.8v-6.6z" fill="#f28a1c"/><path d="M497.2 8l5.2 2.4l-5.2 2.6l-5.2 -2.6z" fill="#fbb768"/><path d="M497.2 13v6.8l5.2 -2.8v-6.6z" fill="#d96e0c"/>
<path d="M904.8 10.2l6 6M910.8 10.2l-6 6" stroke="#444" stroke-width="1.1"/>
<path d="M925.8 13.2h9.2M930.4 8.6v9.2" stroke="#6c6c6c" stroke-width="2"/>
<circle cx="955.2" cy="12" r="5.1" fill="none" stroke="#444" stroke-width="2"/><path d="M955.2 12l3.4 -3.6" stroke="#4a4a4a" stroke-width="1.6"/><path d="M950.6 13.4l2.6 2.4l-3.6 1.4z" fill="#4a4a4a"/><path d="M949 8.6l2.4 2.6" stroke="#cacaca" stroke-width="1.6"/>
<circle cx="980.2" cy="12" r="5.8" fill="none" stroke="#555" stroke-width="1"/><circle cx="980.2" cy="12" r="4" fill="#555"/><path d="M980.2 9.4v2.8h2.4" stroke="#cacaca" stroke-width="1" fill="none"/>
<path d="M1000.4 15.4q1.6 -1.2 1.6 -4.4q0 -3.4 3 -3.8q3 0.4 3 3.8q0 3.2 1.6 4.4z" fill="#555"/><rect x="1003.6" y="16.2" width="2.8" height="1.4" rx="0.7" fill="#555"/><circle cx="1008.2" cy="8.6" r="2" fill="#1b8fe0"/>
<circle cx="1029.8" cy="12" r="5.8" fill="#4e4e4e"/><text x="1029.8" y="15.4" font-size="9.5" fill="#e8e8e8" font-weight="bold" text-anchor="middle" >?</text>
<defs><clipPath id="av"><circle cx="1060.4" cy="12" r="9"/></clipPath><linearGradient id="avg" x1="0" y1="0" x2="0" y2="1"><stop offset="0" stop-color="#b4c4dc"/><stop offset="1" stop-color="#7d93b6"/></linearGradient></defs>
<circle cx="1060.4" cy="12" r="9" fill="url(#avg)"/><g clip-path="url(#av)"><ellipse cx="1060.4" cy="9.4" rx="4" ry="5" fill="#4d5b73"/><path d="M1051 22q0.4 -6.4 6.2 -7.4l1.4 -1.4h3.6l1.4 1.4q5.8 1 6.2 7.4z" fill="#4d5b73"/></g>
<ellipse cx="460" cy="584.6" rx="5.2" ry="2.2" fill="none" stroke="#5a6270" stroke-width="1"/>
<rect x="458.9" y="580.2" width="2.2" height="9" fill="#e8ecf2" stroke="#70788a" stroke-width="0.7"/><path d="M457.6 581.2l2.4 -3l2.4 3z" fill="#e8ecf2" stroke="#70788a" stroke-width="0.7"/><path d="M457 587.2l-1.8 -1.6l0.4 2.4z" fill="#222"/>
<path d="M469.70000000000005 582.6h4.8l-2.4 2.8z" fill="#111"/>
<rect x="479.7" y="581.4" width="10.8" height="8" rx="1.2" fill="#a9b4c8" stroke="#6e7a92" stroke-width="0.9"/><path d="M481 581.2l2.6 -2l2 1.4l2.2 -1.8l1.6 2.4" fill="#c4ccdc" stroke="#6e7a92" stroke-width="0.8"/><rect x="481.4" y="584" width="7.4" height="2.6" fill="#7684a0"/>
<path d="M500.4 584.2l1.8 1.2v-5q0.9 -1 1.7 0v-1.2q0.9 -1 1.7 0v1q0.9 -0.9 1.7 0.1v1q0.9 -0.8 1.6 0.2v4.2q-0.2 2.4 -1.6 3.8h-4.6q-1.6 -1.2 -3.6 -4.4q0.4 -1.2 1.3 -0.9z" fill="#f6f6f6" stroke="#5c6474" stroke-width="0.8" stroke-linejoin="round"/><path d="M503.9 580.4v3.4M505.6 580.2v3.6M507.3 580.6v3.2" stroke="#8a92a2" stroke-width="0.6"/>
<path d="M524.6 584.6l4.4 4.2" stroke="#1c1c1c" stroke-width="1.7" stroke-linecap="round"/><circle cx="522" cy="581.8" r="3.7" fill="#eef6f8" stroke="#5c6474" stroke-width="0.9"/><path d="M528.4 578.8v3M527.4 579.8l1 -1.2l1 1.2" stroke="#444" stroke-width="0.6" fill="none"/>
<rect x="537.4" y="578.6" width="10.6" height="10.6" fill="none" stroke="#9aa2ae" stroke-width="0.6" stroke-dasharray="1.6 1.2"/><path d="M544.8 585l4 4" stroke="#1c1c1c" stroke-width="1.7" stroke-linecap="round"/><circle cx="542" cy="582.2" r="4" fill="#eef6f8" stroke="#5c6474" stroke-width="0.9"/>
<path d="M553.0 582.6h4.8l-2.4 2.8z" fill="#111"/>
<rect x="562.6" y="578.2" width="11.4" height="8.6" rx="0.8" fill="#7fa9e2" stroke="#8c8c8c" stroke-width="1"/><path d="M566.4 587.2h3.8l0.8 2h-5.4z" fill="#9aa0aa"/><rect x="564.6" y="589" width="7.4" height="0.9" fill="#7c828c"/>
<path d="M575.7 582.6h4.8l-2.4 2.8z" fill="#111"/>
<defs><linearGradient id="gg" x1="0" y1="0" x2="0" y2="1"><stop offset="0" stop-color="#a9b0be"/><stop offset="1" stop-color="#7c879e"/></linearGradient></defs><rect x="586.1" y="578.6" width="10.6" height="11" rx="0.8" fill="url(#gg)" stroke="#6e7688" stroke-width="0.6"/><path d="M588.7 578.6v11M591.4 578.6v11M594.1 578.6v11M586.1 581.4h10.6M586.1 584.1h10.6M586.1 586.8h10.6" stroke="#c4cad6" stroke-width="0.4"/>
<path d="M598.9 582.6h4.8l-2.4 2.8z" fill="#111"/>
<rect x="609.2" y="579.3" width="10.6" height="9.8" rx="1" fill="#6d9ddb" stroke="#5a86c4" stroke-width="0.6"/><path d="M614.5 579.3v9.8M609.2 584.2h10.6" stroke="#a9c6ee" stroke-width="1"/>
<path d="M622.0 582.6h4.8l-2.4 2.8z" fill="#111"/>
<rect x="103.7" y="45.4" width="20.7" height="20.2" fill="none" stroke="#6a6a6a" stroke-width="0.8" stroke-dasharray="5 1.8"/>
<rect x="102.60000000000001" y="44.3" width="2.2" height="2.2" fill="#222"/>
<rect x="123.30000000000001" y="44.3" width="2.2" height="2.2" fill="#222"/>
<rect x="102.60000000000001" y="64.5" width="2.2" height="2.2" fill="#222"/>
<rect x="123.30000000000001" y="64.5" width="2.2" height="2.2" fill="#222"/>
<path d="M109 50.3H119.3M109 50.3V60.3" stroke="#555" stroke-width="1" fill="none" stroke-dasharray="3 1.6"/><path d="M119.3 50.3Q119.3 60.3 109 60.3" stroke="#555" stroke-width="1" fill="none"/>
<rect x="108.1" y="49.4" width="1.8" height="1.8" fill="#222"/>
<rect x="118.39999999999999" y="49.4" width="1.8" height="1.8" fill="#222"/>
<rect x="108.1" y="59.4" width="1.8" height="1.8" fill="#222"/>
<path d="M116.4 63.1h10.2M121.5 58v10.2" stroke="#f1f1f1" stroke-width="4.4"/><path d="M116.6 63.1h9.8M121.5 58.2v9.8" stroke="#1d9d3b" stroke-width="2.8"/>
<polygon points="136.12,63.75 149.88,63.75 149.88,66.88 136.12,66.88" fill="#cfcfcf"/>
<polygon points="149.88,63.75 153.88,60.62 153.88,63.50 149.88,66.88" fill="#a6a6a6"/>
<polygon points="136.12,48.75 149.88,48.75 149.88,63.75 136.12,63.75" fill="#5aa7e4"/>
<polygon points="136.12,48.75 141.12,44.38 153.88,44.38 149.88,48.75" fill="#8cc4f2"/>
<polygon points="149.88,48.75 153.88,44.38 153.88,60.62 149.88,63.75" fill="#3b85c9"/>
<path d="M156.5 64V46.5" stroke="#222" stroke-width="1.1"/><path d="M154.5 48.4l2 -3.6l2 3.6z" fill="#222"/>
<path d="M167.38 56.00Q178.00 46.88 191.12 54.75L187.38 59.00Q178.00 53.50 172.00 60.00Z" fill="#8cc4f2"/>
<path d="M167.38 56.00L172.00 60.00Q178.00 53.50 187.38 59.00L187.38 65.00Q178.00 60.00 172.00 65.88L167.38 61.50Z" fill="#5aa7e4"/>
<path d="M167.38 56.00L172.00 60.00L172.00 65.88L167.38 61.50Z" fill="#3b85c9"/>
<path d="M187.38 59.00L191.12 54.75L191.12 60.62L187.38 65.00Z" fill="#f0f0f0" stroke="#555" stroke-width="0.9" stroke-linejoin="round"/>
<path d="M189.88 49.75Q179.25 43.12 169.25 48.25" fill="none" stroke="#333" stroke-width="1.1"/><path d="M167.50 49.25L171.12 46.88L171.50 50.00Z" fill="#222"/>
<polygon points="200.50,49.38 205.50,44.75 223.62,44.75 219.00,49.38" fill="#efefef" stroke="#6e6e6e" stroke-width="0.8" stroke-linejoin="round"/>
<polygon points="219.00,49.38 223.62,44.75 223.62,63.12 219.00,67.75" fill="#b4b4b4" stroke="#6e6e6e" stroke-width="0.8" stroke-linejoin="round"/>
<polygon points="200.50,49.38 219.00,49.38 219.00,67.75 200.50,67.75" fill="#dedede" stroke="#6e6e6e" stroke-width="0.8" stroke-linejoin="round"/>
<defs><clipPath id="hc"><circle cx="209.6" cy="58.2" r="5.2"/></clipPath></defs><circle cx="209.6" cy="58.2" r="5.9" fill="#4f9fe0" stroke="#8a8a8a" stroke-width="1.4"/><g clip-path="url(#hc)"><circle cx="211.9" cy="55.9" r="3.5" fill="#f4f8fc"/></g>
<path d="M234.5 48.4H250.1M234.5 48.4V64M234.5 64H250.1" stroke="#666" stroke-width="1.1" fill="none"/>
<rect x="232" y="45.9" width="5" height="5" fill="#fafafa" stroke="#444" stroke-width="0.9"/>
<rect x="247.4" y="45.699999999999996" width="5.4" height="5.4" fill="#4a9fe0" stroke="#8cc4f2" stroke-width="0.5"/>
<rect x="231.8" y="61.3" width="5.4" height="5.4" fill="#4a9fe0" stroke="#8cc4f2" stroke-width="0.5"/>
<rect x="247.4" y="61.3" width="5.4" height="5.4" fill="#4a9fe0" stroke="#8cc4f2" stroke-width="0.5"/>
<path d="M270.4 45.8h9.6q7.4 1 7.2 8.4v8.2q-0.4 5.4 -6 6.4h-10.4q-5.8 -0.6 -6 -6.4v-9q0.4 -6.6 5.6 -7.6z" fill="#9a76df"/>
<path d="M270.4 45.8h9.6q5 0.6 6.6 4.2l-3.6 3.4h-17.6q0.8 -6.4 5 -7.6z" fill="#c3adf3"/>
<path d="M283 53.4l4.2 -3v12q-0.4 4.4 -4.2 5.8z" fill="#7650c4"/>
<path d="M273.6 46v22.6M265 59.6h18" stroke="#b9a2f0" stroke-width="0.9" fill="none"/>
<circle cx="281.8" cy="50.8" r="5" fill="#f1f1f1"/><polygon points="281.80,44.00 282.83,48.31 286.61,45.99 284.29,49.77 288.60,50.80 284.29,51.83 286.61,55.61 282.83,53.29 281.80,57.60 280.77,53.29 276.99,55.61 279.31,51.83 275.00,50.80 279.31,49.77 276.99,45.99 280.77,48.31" fill="#f7a009"/><circle cx="281.8" cy="50.8" r="1.8" fill="#ffc44d"/>
<path d="M324.4 47.4Q330.4 52 330.8 61M341.2 50Q334 53 333.4 61M325 47Q332 52.6 340.6 49.6M327.6 51.4L331.6 60.6L336.8 52.2z" stroke="#3c8dd2" stroke-width="1.75" fill="none" stroke-linejoin="round"/>
<rect x="321.4" y="44.4" width="5.2" height="5.2" rx="0.8" fill="#fafafa" stroke="#555" stroke-width="0.9" transform="rotate(-8 324 47)"/>
<rect x="339" y="46.8" width="5.2" height="5.2" rx="0.8" fill="#fafafa" stroke="#555" stroke-width="0.9" transform="rotate(35 341.6 49.4)"/>
<circle cx="332" cy="64" r="3.5" fill="#e8eef4" stroke="#2f7fc4" stroke-width="1.2"/><circle cx="332" cy="64" r="1.4" fill="none" stroke="#555" stroke-width="0.7"/>
<polygon points="379.75,49.38 384.50,44.38 388.88,44.38 384.50,49.38" fill="#f4f4f4" stroke="#6e6e6e" stroke-width="0.8" stroke-linejoin="round"/>
<polygon points="379.75,49.38 384.50,49.38 384.50,67.75 379.75,67.75" fill="#ededed" stroke="#6e6e6e" stroke-width="0.8" stroke-linejoin="round"/>
<polygon points="385.12,48.75 388.88,44.38 395.75,44.38 392.00,48.75" fill="#8cc4f2"/>
<polygon points="392.00,48.75 395.75,44.38 395.75,63.75 392.00,67.75" fill="#3b85c9"/>
<polygon points="385.12,48.75 392.00,48.75 392.00,67.75 385.12,67.75" fill="#5aa7e4"/>
<path d="M394.4 55.9h5" stroke="#777" stroke-width="1.2"/><path d="M398.4 53.8l3.2 2.1l-3.2 2.1z" fill="#111"/>
<path d="M411.75 51.25L416.75 44.75H425.12L421.38 51.25Z" fill="#efefef" stroke="#6e6e6e" stroke-width="0.8" stroke-linejoin="round"/>
<path d="M421.38 51.25L425.12 44.75Q435.12 45.62 435.50 56.00L430.12 60.25Q429.75 52.12 421.38 51.25Z" fill="#5aa7e4"/>
<path d="M430.12 60.25L435.50 56.00L435.50 63.38L430.12 67.75Z" fill="#b4b4b4" stroke="#6e6e6e" stroke-width="0.8" stroke-linejoin="round"/>
<path d="M411.75 67.75V51.25H421.38Q429.75 52.12 430.12 60.25V67.75Z" fill="#dedede" stroke="#6e6e6e" stroke-width="0.8" stroke-linejoin="round"/>
<polygon points="443.88,50.00 448.88,44.75 467.62,44.75 462.00,50.00" fill="#e4e4e4" stroke="#6e6e6e" stroke-width="0.8" stroke-linejoin="round"/>
<polygon points="462.00,50.00 467.62,44.75 467.62,62.50 462.00,67.75" fill="#b4b4b4" stroke="#6e6e6e" stroke-width="0.8" stroke-linejoin="round"/>
<polygon points="443.88,50.00 462.00,50.00 462.00,67.75 443.88,67.75" fill="#f4f4f4" stroke="#6e6e6e" stroke-width="1" stroke-linejoin="round"/>
<polygon points="446.75,53.12 458.88,53.12 458.88,65.00 446.75,65.00" fill="#ebebeb"/>
<polygon points="446.75,53.12 452.00,53.12 452.00,60.00 446.75,65.00" fill="#3b85c9"/>
<polygon points="446.75,65.00 452.00,59.75 458.88,59.75 458.88,65.00" fill="#8cc4f2"/>
<polygon points="483.62,49.38 487.62,44.38 499.75,44.38 495.12,49.38" fill="#8cc4f2"/>
<polygon points="495.12,49.38 499.75,44.38 499.75,56.25 495.12,60.62" fill="#3b85c9"/>
<polygon points="483.62,49.38 495.12,49.38 495.12,60.62 483.62,60.62" fill="#5aa7e4"/>
<polygon points="476.00,55.62 479.75,51.50 488.25,51.50 488.25,55.62" fill="#8cc4f2"/>
<polygon points="489.50,60.62 495.12,60.62 492.62,63.12 489.50,67.75" fill="#3b85c9"/>
<polygon points="476.00,55.62 489.50,55.62 489.50,67.75 476.00,67.75" fill="#5aa7e4"/>
<polygon points="509.75,60.00 526.88,60.00 526.88,66.88 509.75,66.88" fill="#dedede" stroke="#8a8a8a" stroke-width="0.6" stroke-linejoin="round"/>
<polygon points="526.88,60.00 530.62,56.25 530.62,63.50 526.88,66.88" fill="#b4b4b4"/>
<polygon points="509.75,49.38 513.50,44.75 530.62,44.75 526.88,49.38" fill="#8cc4f2"/>
<polygon points="526.88,49.38 530.62,44.75 530.62,51.88 526.88,56.25" fill="#3b85c9"/>
<polygon points="509.75,49.38 526.88,49.38 526.88,56.25 509.75,56.25" fill="#5aa7e4"/>
<path d="M508.1 58.1H527L532.6 52.4" stroke="#4a9fe0" stroke-width="1.5" fill="none"/>
<path d="M541.6 56.2h21.4M552.3 45.6v21.4" stroke="#111" stroke-width="1.6"/>
<path d="M540.4 56.2l4.6 -3.6v7.2zM564.2 56.2l-4.6 -3.6v7.2zM552.3 44.4l-3.6 4.6h7.2zM552.3 68.2l-3.6 -4.6h7.2z" fill="#111"/>
<polygon points="581.25,59.38 590.25,59.38 590.25,66.88 581.25,66.88" fill="#dedede" stroke="#909090" stroke-width="0.7" stroke-linejoin="round"/>
<polygon points="590.62,58.75 593.75,55.62 601.50,55.62 600.00,58.75" fill="#efefef" stroke="#909090" stroke-width="0.6" stroke-linejoin="round"/>
<polygon points="600.00,58.75 601.50,55.62 601.50,64.38 600.00,66.88" fill="#b4b4b4"/>
<polygon points="590.62,58.75 600.00,58.75 600.00,66.88 590.62,66.88" fill="#dedede" stroke="#909090" stroke-width="0.7" stroke-linejoin="round"/>
<polygon points="581.25,51.25 584.38,47.50 593.50,47.50 590.62,51.25" fill="#8cc4f2"/>
<polygon points="590.62,51.25 593.50,47.50 593.50,55.62 590.62,58.75" fill="#3b85c9"/>
<polygon points="581.25,51.25 590.62,51.25 590.62,58.75 581.25,58.75" fill="#5aa7e4"/>
<circle cx="598.4" cy="50.6" r="4.6" fill="#f1f1f1"/><polygon points="598.40,44.30 599.36,48.29 602.85,46.15 600.71,49.64 604.70,50.60 600.71,51.56 602.85,55.05 599.36,52.91 598.40,56.90 597.44,52.91 593.95,55.05 596.09,51.56 592.10,50.60 596.09,49.64 593.95,46.15 597.44,48.29" fill="#f7a009"/><circle cx="598.4" cy="50.6" r="1.8" fill="#ffc44d"/>
<path d="M614.75 52.50Q615.62 47.50 620.62 46.25Q624.38 46.25 623.75 49.38V60.62L618.50 65.62L614.75 64.38Z" fill="#c9c9c9" stroke="#5e5e5e" stroke-width="0.9" stroke-linejoin="round"/>
<path d="M618.50 53.75Q619.38 49.38 623.75 49.38V60.62L618.50 65.62Z" fill="#e2e2e2" stroke="#5e5e5e" stroke-width="0.8" stroke-linejoin="round"/>
<path d="M626.88 51.88Q628.75 47.50 632.50 47.25L635.00 50.00V65.00L631.25 61.88L626.88 58.75Z" fill="#d4d4d4" stroke="#5e5e5e" stroke-width="0.9" stroke-linejoin="round"/>
<path d="M631.25 51.25L635.00 50.00V65.00L631.25 61.88Z" fill="#b8b8b8" stroke="#5e5e5e" stroke-width="0.8" stroke-linejoin="round"/>
<rect x="621.6" y="54.6" width="1.6" height="3.6" fill="#3a9ae8"/><rect x="628.2" y="50.6" width="1.6" height="3.2" fill="#3a9ae8"/>
<polygon points="673.12,51.25 680.00,44.75 686.50,44.75 679.62,51.25" fill="#f2f2f2" stroke="#6e6e6e" stroke-width="0.8" stroke-linejoin="round"/>
<polygon points="673.12,51.25 679.62,51.25 679.62,66.88 673.12,66.88" fill="#dedede" stroke="#6e6e6e" stroke-width="0.8" stroke-linejoin="round"/>
<polygon points="679.75,51.00 686.50,45.00 686.50,60.62 679.75,66.50" fill="#4cbe78"/>
<polygon points="689.38,51.00 695.88,45.00 695.88,60.62 689.38,66.50" fill="#e7935c"/>
<path d="M742.7 50.6v6M762.9 50.6v6" stroke="#555" stroke-width="0.9"/><path d="M744.6 53.2h16.4" stroke="#333" stroke-width="0.9"/><path d="M743.4 53.2l2.6 -1.6v3.2zM762.2 53.2l-2.6 -1.6v3.2z" fill="#222"/>
<rect x="742.3" y="58.2" width="20.8" height="3.8" fill="#f5a10a"/><path d="M743.6 58.2v1.4M746.2 58.2v1.4M748.8 58.2v1.4M751.4 58.2v1.4M754 58.2v1.4M756.6 58.2v1.4M759.2 58.2v1.4M761.8 58.2v1.4" stroke="#9a5c00" stroke-width="0.6"/>
<rect x="799.4" y="45.3" width="21.9" height="21.3" fill="#7cc0f4" stroke="#f8f8f8" stroke-width="0.8"/>
<path d="M799.8 66.2v-9.4q3.6 -5.4 6.4 -4.6q2.6 0.8 6 6.6q2.6 -3.2 4.2 -2.6q1.8 0.8 4.5 5.2v4.8z" fill="#3d8ed0"/><path d="M799.8 66.2v-4.2h21.1v4.2z" fill="#3684c6"/>
<circle cx="815" cy="50.9" r="2.5" fill="#f6f3b4"/>
<rect x="851.9" y="42" width="28.7" height="28.3" fill="#0696d7"/>
<rect x="854.3" y="44.4" width="20.8" height="16.2" fill="none" stroke="#7be08a" stroke-width="1" stroke-dasharray="3.2 2"/>
<path d="M870 55.4v10.8l2.4 -2.2l1.8 4l1.8 -0.8l-1.8 -3.9h3.4z" fill="#fff"/>
</svg>
</body></html>
